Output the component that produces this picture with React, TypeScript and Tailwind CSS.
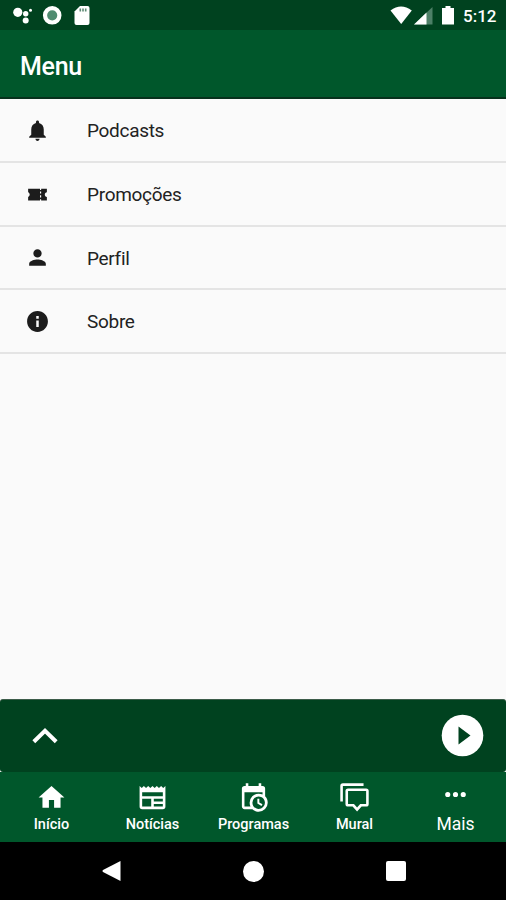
import type { ReactNode } from "react";

const font = "font-['Roboto','Noto_Sans',sans-serif]";

function ListIcon({ children }: { children: ReactNode }) {
  return (
    <svg viewBox="0 0 24 24" className="ml-[25px] h-[25px] w-[25px] shrink-0 fill-[#1c1c1c]">
      {children}
    </svg>
  );
}

const items: { label: string; height: string; icon: ReactNode }[] = [
  {
    label: "Podcasts",
    height: "h-[64px]",
    icon: (
      <path d="M12 22c1.1 0 2-.9 2-2h-4c0 1.1.89 2 2 2zm6-6v-5c0-3.07-1.64-5.64-4.5-6.32V4c0-.83-.67-1.5-1.5-1.5s-1.5.67-1.5 1.5v.68C7.63 5.36 6 7.92 6 11v5l-2 2v1h16v-1l-2-2z" />
    ),
  },
  {
    label: "Promoções",
    height: "h-[64px]",
    icon: (
      <path d="M3 6.4h11.4v1.3h1.1V6.4H21v3.4c-1.2.1-2 1-2 2.3s.8 2.2 2 2.3v3.4h-5.5v-1.300h-1.100v1.300H3v-3.400c.9-.3 1.500-1.200 1.500-2.300S3.900 10.100 3 9.800zm11.400 2.700v2h1.100v-2zm0 3.700v2h1.100v-2z" />
    ),
  },
  {
    label: "Perfil",
    height: "h-[63px]",
    icon: (
      <path d="M12 12c2.21 0 4-1.79 4-4s-1.790-4-4-4-4 1.790-4 4 1.790 4 4 4zm0 2c-2.670 0-8 1.340-8 4v2h16v-2c0-2.660-5.330-4-8-4z" />
    ),
  },
  {
    label: "Sobre",
    height: "h-[64px]",
    icon: (
      <path d="M12 2C6.480 2 2 6.480 2 12s4.480 10 10 10 10-4.480 10-10S17.520 2 12 2zm1.200 15.300h-2.400v-6.300h2.400v6.300zm0-8h-2.400V6.800h2.400v2.500z" />
    ),
  },
];

const tabs = [
  { label: "Início", path: "M10,20V14H14V20H19V12H22L12,3L2,12H5V20H10Z" },
  {
    label: "Notícias",
    path: "M20,11H4V8H20M20,15H13V13H20M20,19H13V17H20M11,19H4V13H11M20.33,4.67L18.67,3L17,4.67L15.33,3L13.67,4.67L12,3L10.33,4.67L8.67,3L7,4.67L5.33,3L3.67,4.67L2,3V19A2,2 0 0,0 4,21H20A2,2 0 0,0 22,19V3L20.33,4.67Z",
  },
  {
    label: "Programas",
    path: "M15,13H16.5V15.82L18.94,17.23L18.19,18.53L15,16.69V13M19,8H5V19H9.67C9.24,18.09 9,17.07 9,16A7,7 0 0,1 16,9C17.07,9 18.09,9.24 19,9.67V8M5,21C3.89,21 3,20.1 3,19V5C3,3.89 3.89,3 5,3H6V1H8V3H16V1H18V3H19A2,2 0 0,1 21,5V11.1C22.24,12.36 23,14.09 23,16A7,7 0 0,1 16,23C14.09,23 12.36,22.24 11.1,21H5M16,11.15A4.85,4.85 0 0,0 11.15,16C11.15,18.68 13.32,20.85 16,20.85A4.85,4.85 0 0,0 20.85,16C20.85,13.32 18.68,11.15 16,11.15Z",
  },
  {
    label: "Mural",
    path: "M7,5H21A2,2 0 0,1 23,7V17A2,2 0 0,1 21,19H17.500L14,22.800L10.500,19H7A2,2 0 0,1 5,17V7A2,2 0 0,1 7,5M7,7V17H11.600L14,19.700L16.400,17H21V7H7M3,15H1V3A2,2 0 0,1 3,1H19V3H3V15Z",
  },
  {
    label: "Mais",
    path: "M16,12A2,2 0 0,1 18,10A2,2 0 0,1 20,12A2,2 0 0,1 18,14A2,2 0 0,1 16,12M10,12A2,2 0 0,1 12,10A2,2 0 0,1 14,12A2,2 0 0,1 12,14A2,2 0 0,1 10,12M4,12A2,2 0 0,1 6,10A2,2 0 0,1 8,12A2,2 0 0,1 6,14A2,2 0 0,1 4,12Z",
  },
];

function StatusBar() {
  return (
    <div className="flex h-[30px] items-center justify-between bg-[#00421f] pr-[9px] pl-[12px] text-white">
      <svg viewBox="12 0 80 30" className="h-[30px] w-[80px] fill-white">
        <circle cx="17.800" cy="12.300" r="4.600" />
        <circle cx="25.700" cy="13.700" r="2.700" />
        <circle cx="30.500" cy="10.300" r="1.500" />
        <circle cx="25.700" cy="20.500" r="3" />
        <circle cx="52.200" cy="15.300" r="7.200" fill="#4f8b70" stroke="white" strokeWidth="4.200" />
        <path d="M80 6h7.500a2 2 0 0 1 2 2v15a2 2 0 0 1-2 2H76.500a2 2 0 0 1-2-2V11.500z" />
        <path d="M79.500 8.500h1.600v3h-1.600zM82.200 8.500h1.600v3h-1.600zM84.900 8.500h1.600v3h-1.600z" fill="#5c8a73" />
      </svg>
      <div className="flex items-center">
        <svg viewBox="388 0 72 30" className="h-[30px] w-[72px] fill-white">
          <path d="M390.500 10.500Q401 2.500 411.800 10.500L401.200 24z" />
          <path d="M432.500 7v17.500H414z" fill="#4d8067" />
          <path d="M426.500 12.500v12H414z" />
          <path d="M445.500 6h5v2h3.500v16.500h-12V8h3.500z" />
        </svg>
        <span className="w-[37px] pt-px pl-[3px] text-[17px] leading-[30px] font-medium whitespace-nowrap">5:12</span>
      </div>
    </div>
  );
}

export default function App() {
  return (
    <div className={`flex h-[900px] w-[506px] flex-col overflow-hidden bg-[#fafafa] ${font}`}>
      <StatusBar />
      <header className="flex h-[69px] items-center border-b-2 border-[#07311c] bg-[#00572b] pt-[6px] pl-[20px]">
        <h1 className="text-[25px] leading-[30px] font-medium tracking-[-0.3px] text-white">Menu</h1>
      </header>
      <ul className="grow">
        {items.map((item) => (
          <li key={item.label} className={`flex items-center border-b-2 border-[#e4e4e4] ${item.height}`}>
            <ListIcon>{item.icon}</ListIcon>
            <span className="ml-[37px] pt-[2px] text-[19px] leading-[28px] tracking-[-0.3px] text-[#222]">
              {item.label}
            </span>
          </li>
        ))}
      </ul>
      <div className="flex h-[73px] shrink-0 items-center justify-between rounded-[3px] border-t border-[#3c5c49] bg-[#00421f] pr-[22px] pl-[32px]">
        <svg viewBox="0 0 26 18" className="-mt-[3px] h-[18px] w-[26px] fill-none stroke-white stroke-[4]">
          <path d="M1.800 15.800 13 4.800 24.200 15.800" />
        </svg>
        <svg viewBox="0 0 43 43" className="-mt-px h-[43px] w-[43px]">
          <circle cx="21.500" cy="21.500" r="20.800" fill="white" />
          <path d="M17.500 12.500v18L29.500 21.500z" fill="#00421f" />
        </svg>
      </div>
      <nav className="grid h-[70px] shrink-0 grid-cols-5 bg-[#00572b] pl-px">
        {tabs.map((tab) => (
          <div key={tab.label} className="flex flex-col items-center text-white">
            <svg
              viewBox="0 0 24 24"
              className={`h-[31px] w-[31px] fill-white ${tab.label === "Mais" ? "mt-[7px]" : "mt-[10px]"}`}
            >
              <path d={tab.path} />
            </svg>
            <span
              className={
                tab.label === "Mais"
                  ? "mt-[4px] text-[17.5px] leading-[20px]"
                  : "mt-[3px] text-[14.5px] leading-[18px] font-medium"
              }
            >
              {tab.label}
            </span>
          </div>
        ))}
      </nav>
      <div className="flex h-[58px] shrink-0 items-center bg-black pl-[101px]">
        <svg viewBox="0 0 22 22" className="h-[22px] w-[22px] fill-white">
          <path d="M19.500 1v20L2 12Q.800 11 2 10z" />
        </svg>
        <div className="ml-[120px] h-[21px] w-[21px] rounded-full bg-white" />
        <div className="ml-[122px] h-[20px] w-[20px] rounded-[2px] bg-white" />
      </div>
    </div>
  );
}
